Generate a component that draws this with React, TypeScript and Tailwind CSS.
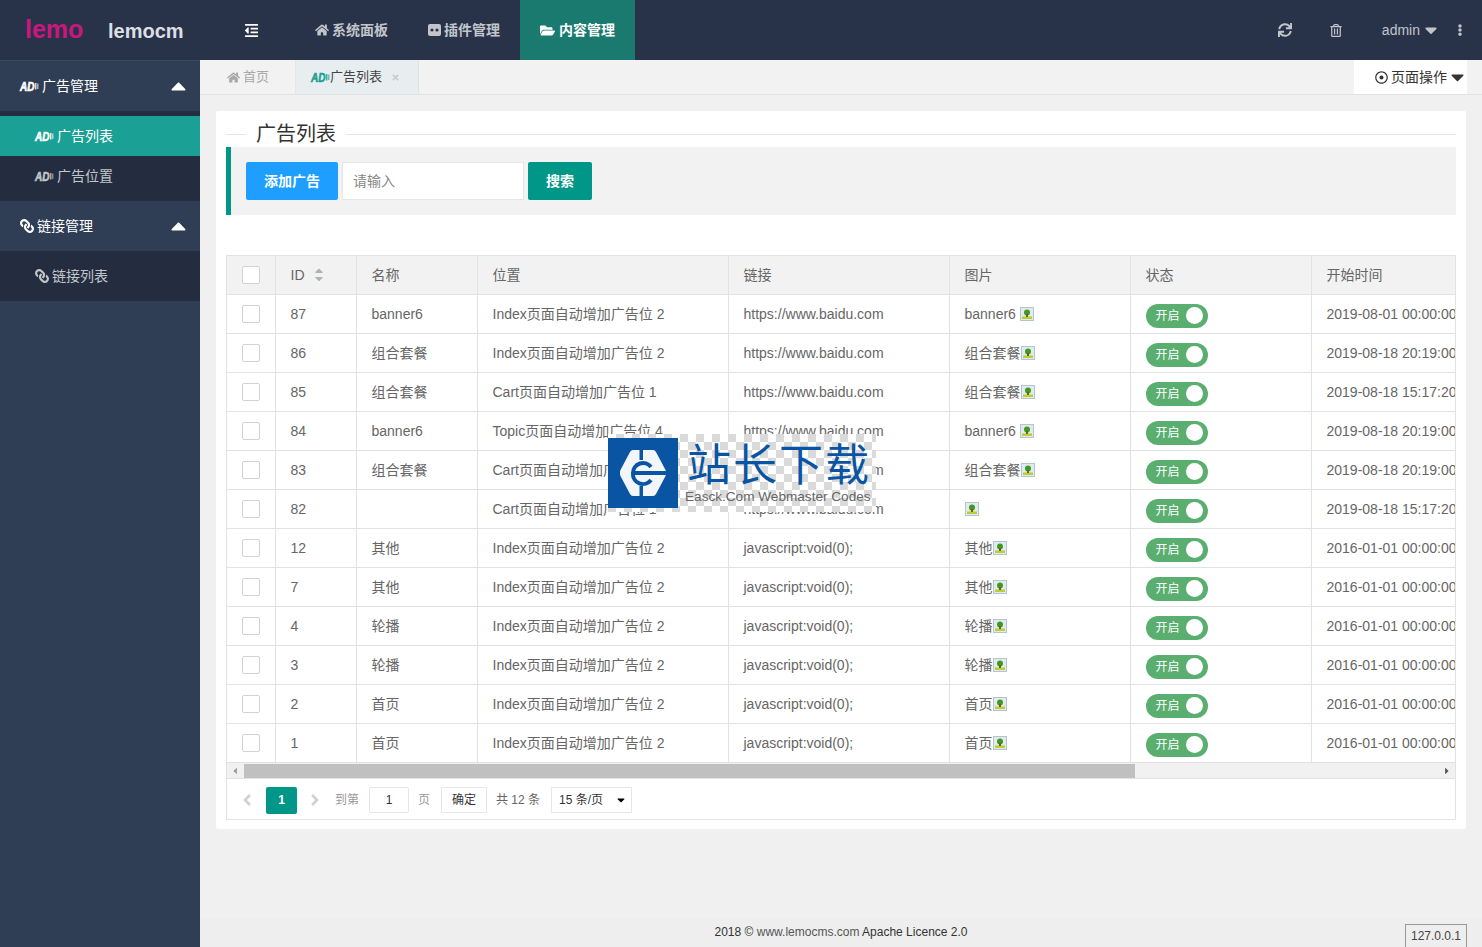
import { FaCaretDown, FaCaretUp, FaEllipsisV, FaFolderOpen, FaHome, FaLink, FaOutdent, FaRegDotCircle, FaSync, FaTimes, FaRegTrashAlt, FaAngleLeft, FaAngleRight, FaCaretLeft, FaCaretRight } from "react-icons/fa";

const rows = [
  { id: "87", name: "banner6", pos: "Index页面自动增加广告位 2", url: "https://www.baidu.com", img: "banner6", time: "2019-08-01 00:00:00" },
  { id: "86", name: "组合套餐", pos: "Index页面自动增加广告位 2", url: "https://www.baidu.com", img: "组合套餐", time: "2019-08-18 20:19:00" },
  { id: "85", name: "组合套餐", pos: "Cart页面自动增加广告位 1", url: "https://www.baidu.com", img: "组合套餐", time: "2019-08-18 15:17:20" },
  { id: "84", name: "banner6", pos: "Topic页面自动增加广告位 4", url: "https://www.baidu.com", img: "banner6", time: "2019-08-18 20:19:00" },
  { id: "83", name: "组合套餐", pos: "Cart页面自动增加广告位 1", url: "https://www.baidu.com", img: "组合套餐", time: "2019-08-18 20:19:00" },
  { id: "82", name: "", pos: "Cart页面自动增加广告位 1", url: "https://www.baidu.com", img: "", time: "2019-08-18 15:17:20" },
  { id: "12", name: "其他", pos: "Index页面自动增加广告位 2", url: "javascript:void(0);", img: "其他", time: "2016-01-01 00:00:00" },
  { id: "7", name: "其他", pos: "Index页面自动增加广告位 2", url: "javascript:void(0);", img: "其他", time: "2016-01-01 00:00:00" },
  { id: "4", name: "轮播", pos: "Index页面自动增加广告位 2", url: "javascript:void(0);", img: "轮播", time: "2016-01-01 00:00:00" },
  { id: "3", name: "轮播", pos: "Index页面自动增加广告位 2", url: "javascript:void(0);", img: "轮播", time: "2016-01-01 00:00:00" },
  { id: "2", name: "首页", pos: "Index页面自动增加广告位 2", url: "javascript:void(0);", img: "首页", time: "2016-01-01 00:00:00" },
  { id: "1", name: "首页", pos: "Index页面自动增加广告位 2", url: "javascript:void(0);", img: "首页", time: "2016-01-01 00:00:00" },
];

// audio-description mark: wide italic AD with two short sound bars
function AdIcon({ className }: { className?: string }) {
  return (
    <svg width="19" height="10" viewBox="0 0 19 10" className={"shrink-0 overflow-visible " + (className ?? "")}>
      <text x="0" y="9.500" fontSize="12" fontWeight="700" fontStyle="italic" fill="currentColor" stroke="currentColor" strokeWidth="0.600" textLength="14.500" lengthAdjust="spacingAndGlyphs">AD</text>
      <rect x="15" y="2" width="1.500" height="6.500" fill="currentColor" opacity="0.8" />
      <rect x="17" y="2.500" width="1.500" height="5.500" fill="currentColor" opacity="0.6" />
    </svg>
  );
}

function LinkIcon() {
  return <FaLink className="w-[14px] h-[14px] -scale-x-100" />;
}

function PluginIcon() {
  return (
    <svg width="13" height="12" viewBox="0 0 13 12">
      <rect width="13" height="12" rx="2" fill="currentColor" />
      <circle cx="4" cy="6" r="1.600" fill="#28334a" />
      <circle cx="9" cy="6" r="1.600" fill="#28334a" />
    </svg>
  );
}

function BrokenImage() {
  return (
    <svg width="14" height="14" viewBox="0 0 14 14" className="inline-block shrink-0">
      <rect x="0.500" y="0.500" width="13" height="13" fill="#dfeaf5" stroke="#b9c4c9" />
      <rect x="2" y="10" width="10" height="2" fill="#b5cf3d" />
      <path d="M2 10h10v-1H2z" fill="#d6df60" />
      <circle cx="7" cy="5.500" r="3" fill="#3f9a1d" />
      <rect x="6" y="7" width="2" height="3" fill="#7a5a20" />
    </svg>
  );
}

function Checkbox() {
  return <div className="w-[18px] h-[18px] mx-auto bg-white border border-[#d2d2d2] rounded-[2px]" />;
}

function Switch() {
  return (
    <div className="w-[62px] h-6 mt-[4px] rounded-full bg-[#5aae70] flex items-center justify-between pl-[10px] pr-[5px]">
      <span className="text-xs text-white">开启</span>
      <span className="w-[17px] h-[17px] rounded-full bg-white" />
    </div>
  );
}

function Sidebar() {
  return (
    <aside className="w-[200px] shrink-0 bg-[#2f3e55] text-sm">
      <div className="h-[51px] border-t border-[#3a4960] flex items-center justify-between pl-5 pr-[14px] text-white">
        <span className="flex items-center gap-[3px]"><AdIcon />广告管理</span>
        <FaCaretUp className="w-[15px] h-[24px]" />
      </div>
      <div className="bg-[#232d3f] py-[5px]">
        <div className="h-10 bg-[#1aa094] text-white flex items-center gap-[3px] pl-[35px]"><AdIcon />广告列表</div>
        <div className="h-10 text-[#c2c5ca] flex items-center gap-[3px] pl-[35px]"><AdIcon />广告位置</div>
      </div>
      <div className="h-[50px] flex items-center justify-between pl-5 pr-[14px] text-white">
        <span className="flex items-center gap-[3px]"><LinkIcon />链接管理</span>
        <FaCaretUp className="w-[15px] h-[24px]" />
      </div>
      <div className="bg-[#232d3f] py-[5px]">
        <div className="h-10 text-[#c2c5ca] flex items-center gap-[3px] pl-[35px]"><LinkIcon />链接列表</div>
      </div>
    </aside>
  );
}

function Header() {
  return (
    <header className="h-[60px] bg-[#28334a] flex items-center text-sm text-[#c2c5ca]">
      <div className="w-[200px] shrink-0 pl-[25px] flex items-baseline">
        <span className="text-[25px] font-bold text-[#c9177e] w-[83px]">lemo</span>
        <span className="text-xl font-bold text-[#dcdfe3]">lemocm</span>
      </div>
      <div className="w-[95px] shrink-0 pl-[44px] text-white"><FaOutdent className="w-[15px] h-[15px]" /></div>
      <div className="w-[113px] h-full flex items-center justify-center gap-[3px] font-bold"><FaHome className="w-[14px] h-[14px]" />系统面板</div>
      <div className="w-[112px] h-full flex items-center justify-center gap-[3px] font-bold"><PluginIcon />插件管理</div>
      <div className="w-[115px] h-full flex items-center justify-center gap-[4px] font-bold bg-[#1b7a6f] text-white"><FaFolderOpen className="w-[15px] h-[15px]" />内容管理</div>
      <div className="flex-1" />
      <div className="flex items-center">
        <FaSync className="w-[14px] h-[14px]" />
        <FaRegTrashAlt className="w-3 h-[13px] ml-[38px]" />
        <span className="ml-[40px] flex items-center gap-[5px]">admin<FaCaretDown className="w-[12px] h-[22px]" /></span>
        <FaEllipsisV className="w-[10px] h-3 ml-[18px] mr-[17px]" />
      </div>
    </header>
  );
}

function TabBar() {
  return (
    <div className="h-[35px] bg-[#f2f2f2] border-b border-[#e2e2e2] flex text-[13px]">
      <div className="w-[96px] border-r border-[#e6e6e6] flex items-center gap-[3px] pl-[27px] text-[#a8a8a8]"><FaHome className="w-[13px] h-[13px]" />首页</div>
      <div className="w-[123px] bg-[#e8edf0] border-r border-[#dfe3e6] flex items-center pl-[15px] text-[#444]">
        <AdIcon className="text-[#1aa094]" />
        <span>广告列表</span>
        <FaTimes className="w-[9px] h-[9px] ml-[9px] text-[#ccc]" />
      </div>
      <div className="flex-1" />
      <div className="w-[113px] mr-[15px] bg-white flex items-center pl-[21px] gap-[3px] text-sm text-[#333]">
        <FaRegDotCircle className="w-[13px] h-[13px]" />页面操作<FaCaretDown className="w-[13px] h-[22px] ml-[1px]" />
      </div>
    </div>
  );
}

function Toolbar() {
  return (
    <div className="h-[68px] bg-[#f2f2f2] border-l-[5px] border-[#009688] pl-[15px] flex items-center">
      <button className="w-[92px] h-[38px] bg-[#1e9fff] text-white text-sm font-bold rounded-[2px]">添加广告</button>
      <input readOnly placeholder="请输入" className="w-[182px] h-[38px] ml-1 pl-[10px] bg-white border border-[#e6e6e6] text-sm placeholder:text-[#888] outline-none" />
      <button className="w-16 h-[38px] ml-1 bg-[#009688] text-white text-sm font-bold rounded-[2px]">搜索</button>
    </div>
  );
}

function DataTable() {
  const th = "h-[38px] border-r border-[#e2e2e2] pl-[15px] text-left font-normal";
  const td = "h-[39px] border-r border-t border-[#e2e2e2] pl-[15px] whitespace-nowrap overflow-hidden";
  return (
    <div className="overflow-hidden">
      <table className="w-[1640px] table-fixed border-collapse text-sm text-[#666]">
        <colgroup>
          <col className="w-[48px]" />
          <col className="w-[81px]" />
          <col className="w-[121px]" />
          <col className="w-[251px]" />
          <col className="w-[221px]" />
          <col className="w-[181px]" />
          <col className="w-[181px]" />
          <col />
        </colgroup>
        <thead className="bg-[#f2f2f2]">
          <tr>
            <th className={th + " !pl-0"}><Checkbox /></th>
            <th className={th}>
              <span className="flex items-center gap-[8px]">ID
                <span className="flex flex-col text-[#b2b2b2]"><FaCaretUp className="w-[12px] h-[13px] -mb-[5px]" /><FaCaretDown className="w-[12px] h-[13px]" /></span>
              </span>
            </th>
            <th className={th}>名称</th>
            <th className={th}>位置</th>
            <th className={th}>链接</th>
            <th className={th}>图片</th>
            <th className={th}>状态</th>
            <th className={th}>开始时间</th>
          </tr>
        </thead>
        <tbody>
          {rows.map((r) => (
            <tr key={r.id}>
              <td className={td + " !pl-0"}><Checkbox /></td>
              <td className={td}>{r.id}</td>
              <td className={td}>{r.name}</td>
              <td className={td}>{r.pos}</td>
              <td className={td}>{r.url}</td>
              <td className={td}>
                <span className={"flex items-center " + (r.img === "banner6" ? "gap-[4px]" : "")}>{r.img}<BrokenImage /></span>
              </td>
              <td className={td}><Switch /></td>
              <td className={td}>{r.time}</td>
            </tr>
          ))}
        </tbody>
      </table>
    </div>
  );
}

function ScrollBar() {
  return (
    <div className="h-[17px] bg-[#f1f1f1] border-y border-[#e2e2e2] flex items-center text-[#555]">
      <FaCaretLeft className="w-[10px] h-[10px] ml-[3px] text-[#999]" />
      <div className="w-[891px] h-[14px] ml-[4px] bg-[#c0c0c0]" />
      <div className="flex-1" />
      <FaCaretRight className="w-[10px] h-[10px] mr-[3px]" />
    </div>
  );
}

function Pager() {
  return (
    <div className="h-10 pt-[2px] flex items-center text-xs text-[#999]">
      <FaAngleLeft className="w-4 h-[18px] ml-[12px] text-[#d2d2d2]" />
      <span className="w-[31px] h-[27px] ml-[11px] bg-[#009688] text-white font-bold rounded-[2px] flex items-center justify-center">1</span>
      <FaAngleRight className="w-4 h-[18px] ml-[10px] text-[#d2d2d2]" />
      <span className="ml-[12px]">到第</span>
      <span className="w-10 h-[26px] ml-[10px] border border-[#e6e6e6] rounded-[2px] flex items-center justify-center text-[#333]">1</span>
      <span className="ml-[9px]">页</span>
      <span className="w-[46px] h-[26px] ml-[11px] border border-[#e6e6e6] flex items-center justify-center text-[#333]">确定</span>
      <span className="ml-[9px] text-[#666]">共 12 条</span>
      <span className="w-[81px] h-[26px] ml-[11px] pl-[7px] pr-[5px] border border-[#e6e6e6] flex items-center justify-between text-[#333]">15 条/页<FaCaretDown className="w-[10px] h-[12px] text-black" /></span>
    </div>
  );
}

function Watermark() {
  return (
    <div className="absolute left-[608px] top-[434px] w-[268px] h-[78px] bg-white bg-[conic-gradient(#dadada_25%,#ffffff_0_50%,#dadada_0_75%,#ffffff_0)] bg-[length:16px_16px]">
      <div className="absolute left-0 top-[4px] w-[70px] h-[70px] bg-[#0a55a3] flex items-center justify-center">
        <svg width="46" height="48" viewBox="0 0 46 48">
          <path d="M13 1h20a4 4 0 0 1 3 2l9 17a8 8 0 0 1 0 8l-9 17a4 4 0 0 1-3 2H13a4 4 0 0 1-3-2L1 28a8 8 0 0 1 0-8L10 3a4 4 0 0 1 3-2z" fill="#f2f5fa" />
          <rect x="19.500" y="0" width="3.500" height="11" fill="#0a55a3" />
          <rect x="19.500" y="37" width="3.500" height="11" fill="#0a55a3" />
          <path d="M34 24H13M13 24a10 10 0 0 1 18-6M13 24a10 10 0 0 0 18 7" fill="none" stroke="#0a55a3" strokeWidth="4" />
          <rect x="30" y="22" width="16" height="4" fill="#0a55a3" />
        </svg>
      </div>
      <div className="absolute left-[79px] top-[6px] text-[44px] leading-[52px] tracking-[2px] whitespace-nowrap text-[#0a55a3]">站长下载</div>
      <div className="absolute left-[77px] top-[55px] text-[13.600px] leading-4 whitespace-nowrap text-[#666]">Easck.Com Webmaster Codes</div>
    </div>
  );
}

export default function App() {
  return (
    <div className="relative w-[1482px] h-[947px] overflow-hidden bg-[#f0f0f0] font-['Liberation_Sans','Noto_Sans_CJK_SC',sans-serif]">
      <Header />
      <div className="flex h-[887px]">
        <Sidebar />
        <main className="flex-1 min-w-0 flex flex-col">
          <TabBar />
          <div className="mx-4 mt-4 h-[718px] bg-white rounded-[2px] px-[10px] shrink-0">
            <div className="h-[36px] pt-[10px] flex items-center">
              <span className="w-5 h-px bg-[#e6e6e6]" />
              <span className="px-[10px] text-xl text-[#333]">广告列表</span>
              <span className="flex-1 h-px bg-[#e6e6e6]" />
            </div>
            <Toolbar />
            <div className="mt-10 border border-[#e2e2e2]">
              <DataTable />
              <ScrollBar />
              <Pager />
            </div>
          </div>
          <div className="flex-1" />
          <footer className="relative h-[29px] pb-[2px] bg-[#eeeeee] flex items-center justify-center text-xs text-[#333]">
            <span>2018 © <span className="text-[#555]">www.lemocms.com</span> Apache Licence 2.0</span>
            <span className="absolute right-[15px] bottom-0 w-[62px] h-[23px] border border-[#999] border-b-0 flex items-center justify-center text-[#444]">127.0.0.1</span>
          </footer>
        </main>
      </div>
      <Watermark />
    </div>
  );
}
